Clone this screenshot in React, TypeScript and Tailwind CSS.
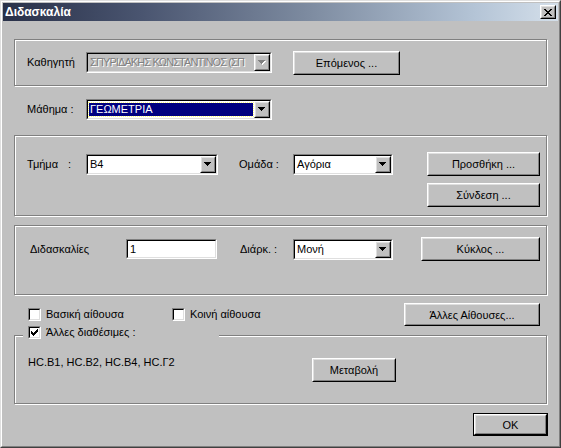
import type { ReactNode } from "react";

function Raised({ className = "", children }: { className?: string; children?: ReactNode }) {
  return (
    <div className={`border border-t-white border-l-white border-r-black border-b-black bg-[#c0c0c0] ${className}`}>
      <div className="flex h-full w-full items-center justify-center border border-t-[#dfdfdf] border-l-[#dfdfdf] border-r-[#808080] border-b-[#808080]">
        {children}
      </div>
    </div>
  );
}

function Sunken({ className = "", bg = "bg-white", children }: { className?: string; bg?: string; children?: ReactNode }) {
  return (
    <div className={`border border-t-[#808080] border-l-[#808080] border-r-white border-b-white ${className}`}>
      <div className={`h-full w-full border border-t-black border-l-black border-r-[#dfdfdf] border-b-[#dfdfdf] ${bg}`}>
        {children}
      </div>
    </div>
  );
}

function Button({ className, label, isDefault = false }: { className: string; label: string; isDefault?: boolean }) {
  if (isDefault) {
    return (
      <div className={`border border-black ${className}`}>
        <Raised className="h-full w-full">
          <span className="pt-px">{label}</span>
        </Raised>
      </div>
    );
  }
  return (
    <Raised className={className}>
      <span className="pt-px">{label}</span>
    </Raised>
  );
}

function Arrow({ disabled = false }: { disabled?: boolean }) {
  const fill = disabled ? "#808080" : "#000";
  return (
    <svg width="8" height="5" viewBox="0 0 8 5" shapeRendering="crispEdges">
      {disabled && (
        <g fill="#fff">
          <rect x="1" y="1" width="7" height="1" />
          <rect x="2" y="2" width="5" height="1" />
          <rect x="3" y="3" width="3" height="1" />
          <rect x="4" y="4" width="1" height="1" />
        </g>
      )}
      <g fill={fill}>
        <rect x="0" y="0" width="7" height="1" />
        <rect x="1" y="1" width="5" height="1" />
        <rect x="2" y="2" width="3" height="1" />
        <rect x="3" y="3" width="1" height="1" />
      </g>
    </svg>
  );
}

function Combo({
  className,
  value,
  disabled = false,
  selected = false,
}: {
  className: string;
  value: string;
  disabled?: boolean;
  selected?: boolean;
}) {
  return (
    <Sunken className={`h-[21px] ${className}`} bg={disabled ? "bg-[#c0c0c0]" : "bg-white"}>
      <div className="flex h-full">
        <div className="flex min-w-0 flex-1 items-center overflow-hidden whitespace-nowrap pl-px pr-px">
          {selected ? (
            <div className="flex h-[13px] flex-1 items-center bg-[#000080] pl-px text-white outline outline-1 outline-dotted outline-[#ffff80]">
              {value}
            </div>
          ) : (
            <span
              className={
                disabled
                  ? "pl-px tracking-[-0.9px] text-[#808080] [text-shadow:1px_1px_0_#fff]"
                  : "pl-px text-black"
              }
            >
              {value}
            </span>
          )}
        </div>
        <Raised className="h-full w-[16px] shrink-0">
          <Arrow disabled={disabled} />
        </Raised>
      </div>
    </Sunken>
  );
}

const CHECK = [
  "......X",
  ".....XX",
  "X...XXX",
  "XX.XXX.",
  "XXXXX..",
  ".XXX...",
  "..X....",
];

function CheckBox({ checked = false }: { checked?: boolean }) {
  return (
    <Sunken className="h-[13px] w-[13px] shrink-0" bg="bg-white">
      {checked && (
        <svg width="9" height="9" viewBox="0 0 9 9" shapeRendering="crispEdges" className="block">
          {CHECK.flatMap((row, y) =>
            row.split("").map((c, x) =>
              c === "X" ? <rect key={`${x}-${y}`} x={x + 1} y={y + 1} width="1" height="1" fill="#000" /> : null
            )
          )}
        </svg>
      )}
    </Sunken>
  );
}

const CLOSE_X = [
  "XX....XX",
  ".XX..XX.",
  "..XXXX..",
  "...XX...",
  "..XXXX..",
  ".XX..XX.",
  "XX....XX",
];

function Group({ className = "", children }: { className?: string; children?: ReactNode }) {
  return (
    <div className={`relative border border-[#808080] shadow-[inset_1px_1px_0_#fff,1px_1px_0_#fff] ${className}`}>
      {children}
    </div>
  );
}

export default function App() {
  return (
    <div className="font-['Liberation_Sans',Arial,sans-serif] text-[11px] leading-[13px] text-black">
      <div className="h-[448px] w-[561px] border border-t-[#dfdfdf] border-l-[#dfdfdf] border-r-[#404040] border-b-[#404040] bg-[#c0c0c0]">
        <div className="h-full w-full border border-t-white border-l-white border-r-[#808080] border-b-[#808080] p-px">
          {/* title bar */}
          <div className="flex h-[18px] items-center bg-[linear-gradient(90deg,#283048_0%,#4a5570_25%,#7d8ba0_55%,#b4c4d6_85%,#d4dfea_100%)] pl-[2px] pr-[2px]">
            <span className="text-[12px] font-bold text-white">Διδασκαλία</span>
            <Raised className="ml-auto h-[14px] w-[16px]">
              <svg width="8" height="7" viewBox="0 0 8 7" shapeRendering="crispEdges" className="block">
                {CLOSE_X.flatMap((row, y) =>
                  row.split("").map((c, x) =>
                    c === "X" ? <rect key={`${x}-${y}`} x={x} y={y} width="1" height="1" fill="#000" /> : null
                  )
                )}
              </svg>
            </Raised>
          </div>

          <div className="px-[11px]">
            {/* teacher */}
            <Group className="mt-[18px] flex h-[47px] items-center pl-[12px]">
              <span className="w-[59px] whitespace-nowrap overflow-hidden">Καθηγητή</span>
              <Combo className="w-[186px]" value="ΣΠΥΡΙΔΑΚΗΣ ΚΩΝΣΤΑΝΤΙΝΟΣ (ΣΠ" disabled />
              <Button className="ml-[21px] h-[24px] w-[107px]" label="Επόμενος ..." />
            </Group>

            {/* lesson */}
            <div className="mt-[13px] flex h-[21px] items-center pl-[13px]">
              <span className="w-[59px]">Μάθημα :</span>
              <Combo className="w-[186px]" value="ΓΕΩΜΕΤΡΙΑ" selected />
            </div>

            {/* class / group */}
            <Group className="mt-[15px] h-[81px] pt-[16px] pl-[12px]">
              <div className="flex h-[24px] items-center">
                <span className="w-[41px]">Τμήμα</span>
                <span className="w-[18px]">:</span>
                <Combo className="w-[132px]" value="B4" />
                <span className="ml-[21px] w-[54px]">Ομάδα :</span>
                <Combo className="w-[100px]" value="Αγόρια" />
                <Button className="ml-[34px] h-[24px] w-[113px]" label="Προσθήκη ..." />
              </div>
              <div className="mt-[7px] flex justify-end pr-[6px]">
                <Button className="h-[24px] w-[113px]" label="Σύνδεση ..." />
              </div>
            </Group>

            {/* periods */}
            <Group className="mt-[9px] h-[70px] pt-[11px] pl-[15px]">
              <div className="flex h-[24px] items-center">
                <span className="w-[96px]">Διδασκαλίες</span>
                <Sunken className="h-[20px] w-[91px]" bg="bg-white">
                  <div className="flex h-full items-center pl-[2px]">1</div>
                </Sunken>
                <span className="ml-[23px] w-[53px]">Διάρκ. :</span>
                <Combo className="w-[100px]" value="Μονή" />
                <Button className="ml-[28px] h-[24px] w-[119px]" label="Κύκλος ..." />
              </div>
            </Group>

            {/* room checkboxes */}
            <div className="mt-[8px] flex h-[23px] items-center pl-[14px] pr-[7px]">
              <div className="flex w-[144px] items-center">
                <CheckBox />
                <span className="ml-[5px]">Βασική αίθουσα</span>
              </div>
              <div className="flex items-center">
                <CheckBox />
                <span className="ml-[5px]">Κοινή αίθουσα</span>
              </div>
              <Button className="ml-auto h-[23px] w-[136px]" label="Άλλες Αίθουσες..." />
            </div>

            {/* other rooms */}
            <Group className="mt-[9px] h-[69px] pt-[20px] pl-[13px]">
              <div className="absolute left-[8px] top-[-10px] flex h-[13px] w-[196px] items-center bg-[#c0c0c0] pl-[5px]">
                <CheckBox checked />
                <span className="ml-[5px]">Άλλες διαθέσιμες :</span>
              </div>
              <div className="flex items-start">
                <span className="w-[284px]">HC.B1, HC.B2, HC.B4, HC.Γ2</span>
                <Button className="mt-[2px] h-[24px] w-[84px]" label="Μεταβολή" />
              </div>
            </Group>

            <div className="mt-[9px] -mr-px flex justify-end">
              <Button className="h-[23px] w-[75px]" label="OK" isDefault />
            </div>
          </div>
        </div>
      </div>
    </div>
  );
}
